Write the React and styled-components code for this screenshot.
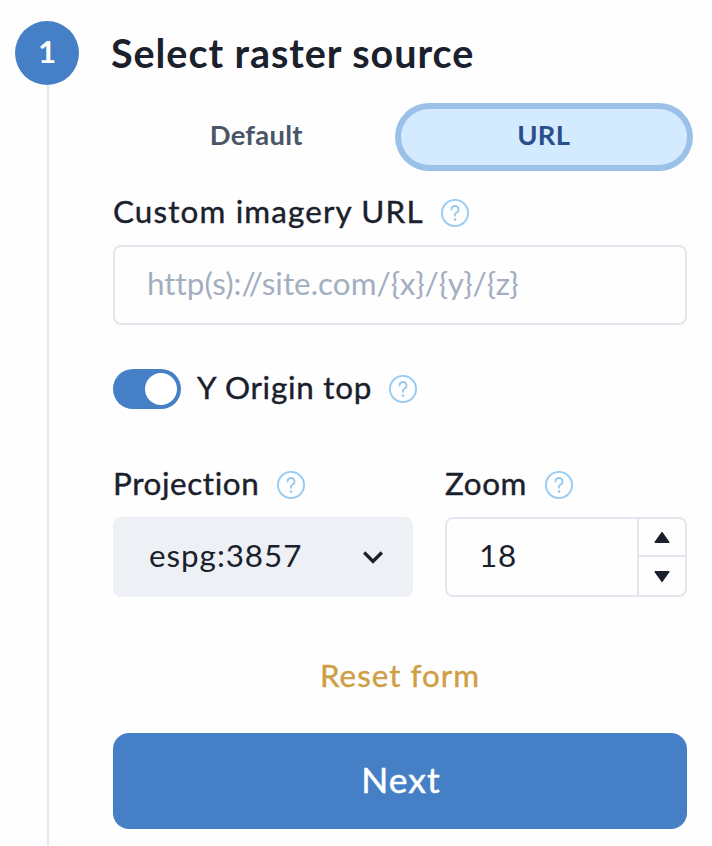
import React, { useState } from "react";
import styled, { createGlobalStyle } from "styled-components";

const Global = createGlobalStyle`
  *, *::before, *::after { box-sizing: border-box; }
  body {
    margin: 0;
    background: #fefefe;
    color: #1a202c;
    font-family: Lato, "Open Sans", sans-serif;
    font-size: 31.4px;
    line-height: 48px;
    overflow: hidden;
  }
  button, input { font: inherit; color: inherit; border: 0; padding: 0; background: none; }
`;

const Page = styled.main`
  display: grid;
  grid-template-columns: 64px 574px;
  column-gap: 34px;
  width: 712px;
  height: 846px;
  padding: 21px 0 0 15px;
  overflow: hidden;
`;

const Rail = styled.div`
  display: flex;
  flex-direction: column;
  align-items: center;
`;

const StepBadge = styled.div`
  flex: none;
  width: 64px;
  height: 64px;
  border-radius: 50%;
  background: #4580c6;
  color: #fff;
  font-size: 31.4px;
  font-weight: 700;
  line-height: 61px;
  text-align: center;
`;

const RailLine = styled.div`
  flex: 1;
  width: 2px;
  margin-left: 2px;
  background: #e2e7f0;
`;

const Form = styled.form`
  display: flex;
  flex-direction: column;
`;

const Title = styled.h1`
  margin: 0 0 24px -2px;
  height: 64px;
  font-size: 39.5px;
  font-weight: 700;
  line-height: 63px;
  letter-spacing: 0.95px;
  white-space: nowrap;
`;

const Tabs = styled.div`
  display: grid;
  grid-template-columns: 1fr 1fr;
  column-gap: 1px;
  height: 56px;
  margin-bottom: 24px;
`;

const Tab = styled.button`
  border-radius: 28px;
  padding-bottom: 4px;
  font-size: 27.4px;
  font-weight: 700;
  line-height: 52px;
  letter-spacing: 0.25px;
  color: ${(p) => (p.$active ? "#2a4e8a" : "#4a5568")};
  background: ${(p) => (p.$active ? "#d4eaff" : "transparent")};
  box-shadow: ${(p) => (p.$active ? "0 0 0 6px #9bc1e8" : "none")};
`;

const LabelRow = styled.div`
  display: flex;
  align-items: center;
  height: 48px;
  margin-bottom: ${(p) => p.$gap ?? "8px"};
`;

const Label = styled.label`
  width: ${(p) => p.$width};
  padding-bottom: 4px;
  font-weight: 400;
  letter-spacing: ${(p) => p.$spacing};
  -webkit-text-stroke: 0.4px currentColor;
  white-space: nowrap;
`;

const HelpIcon = styled.svg`
  flex: none;
  width: 28px;
  height: 28px;
  fill: none;
  stroke: #97cbf2;
  stroke-width: 1.6;
`;

const UrlInput = styled.input`
  width: 574px;
  height: 80px;
  margin-bottom: 40px;
  padding: 0 32px 4px;
  border: 2px solid #e2e7ee;
  border-radius: 8px;
  outline: 0;
  letter-spacing: 0.02px;
  &::placeholder { color: #a3afc0; opacity: 1; }
`;

const Toggle = styled.button`
  flex: none;
  display: flex;
  justify-content: ${(p) => (p.$on ? "flex-end" : "flex-start")};
  width: 68px;
  height: 40px;
  margin-right: 16px;
  padding: 4px;
  border-radius: 20px;
  background: ${(p) => (p.$on ? "#4580c6" : "#cbd5e0")};
`;

const Knob = styled.span`
  width: 32px;
  height: 32px;
  border-radius: 50%;
  background: #fff;
`;

const Columns = styled.div`
  display: grid;
  grid-template-columns: 300px 242px;
  column-gap: 32px;
  margin-bottom: 56px;
`;

const Select = styled.button`
  display: flex;
  align-items: center;
  justify-content: space-between;
  width: 300px;
  height: 80px;
  padding: 0 20px 0 36px;
  border-radius: 8px;
  background: #edf0f5;
  letter-spacing: 0.95px;
`;

const SelectValue = styled.span`
  padding-bottom: 4px;
`;

const Chevron = styled.svg`
  width: 40px;
  height: 40px;
  fill: #1a202c;
`;

const NumberField = styled.div`
  display: flex;
  height: 80px;
  border: 2px solid #e2e7ee;
  border-radius: 8px;
  overflow: hidden;
`;

const NumberInput = styled.input`
  width: 190px;
  padding: 0 0 4px 32px;
  outline: 0;
  letter-spacing: 0.8px;
`;

const Steppers = styled.div`
  display: flex;
  flex-direction: column;
  width: 50px;
  border-left: 2px solid #e2e7ee;
`;

const Stepper = styled.button`
  display: flex;
  align-items: center;
  justify-content: center;
  flex: none;
  width: 46px;
  height: 38px;
  border-bottom: ${(p) => (p.$divided ? "2px solid #e2e7ee" : "0")};
`;

const Triangle = styled.svg`
  width: 18px;
  height: 19px;
  fill: #1a202c;
`;

const ResetButton = styled.button`
  align-self: center;
  height: 48px;
  margin-bottom: 32px;
  padding-bottom: 4px;
  color: #cf9f45;
  font-weight: 400;
  letter-spacing: 1px;
  line-height: 44px;
  -webkit-text-stroke: 0.4px currentColor;
`;

const NextButton = styled.button`
  flex: none;
  height: 96px;
  padding: 0 0 2px 2px;
  border-radius: 16px;
  background: #4580c6;
  color: #fff;
  font-size: 35.4px;
  font-weight: 400;
  letter-spacing: 1.1px;
  -webkit-text-stroke: 0.5px currentColor;
`;

function Help() {
  return (
    <HelpIcon viewBox="0 0 24 24" aria-hidden="true">
      <path strokeLinecap="round" d="M9,9a3,3,0,1,1,4,2.829,1.5,1.5,0,0,0-1,1.415V14.25" />
      <path strokeLinecap="round" d="M12,17.25a.375.375,0,1,0,.375.375A.375.375,0,0,0,12,17.25h0" />
      <circle cx="12" cy="12" r="11.2" />
    </HelpIcon>
  );
}

export default function App() {
  const [source, setSource] = useState("url");
  const [originTop, setOriginTop] = useState(true);
  const [zoom, setZoom] = useState(18);

  return (
    <>
      <Global />
      <Page>
        <Rail>
          <StepBadge>1</StepBadge>
          <RailLine />
        </Rail>
        <Form onSubmit={(e) => e.preventDefault()}>
          <Title>Select raster source</Title>
          <Tabs>
            <Tab type="button" $active={source === "default"} onClick={() => setSource("default")}>Default</Tab>
            <Tab type="button" $active={source === "url"} onClick={() => setSource("url")}>URL</Tab>
          </Tabs>
          <LabelRow>
            <Label htmlFor="url" $width="328px" $spacing="1.15px">Custom imagery URL</Label>
            <Help />
          </LabelRow>
          <UrlInput id="url" placeholder="http(s)://site.com/{x}/{y}/{z}" />
          <LabelRow $gap="48px">
            <Toggle type="button" $on={originTop} onClick={() => setOriginTop(!originTop)}><Knob /></Toggle>
            <Label $width="192px" $spacing="0.75px">Y Origin top</Label>
            <Help />
          </LabelRow>
          <Columns>
            <div>
              <LabelRow>
                <Label $width="164px" $spacing="0.6px">Projection</Label>
                <Help />
              </LabelRow>
              <Select type="button">
                <SelectValue>espg:3857</SelectValue>
                <Chevron viewBox="0 0 24 24"><path d="M16.59 8.59L12 13.17 7.41 8.59 6 10l6 6 6-6z" /></Chevron>
              </Select>
            </div>
            <div>
              <LabelRow>
                <Label htmlFor="zoom" $width="100px" $spacing="0.6px">Zoom</Label>
                <Help />
              </LabelRow>
              <NumberField>
                <NumberInput id="zoom" value={zoom} onChange={(e) => setZoom(Number(e.target.value) || 0)} />
                <Steppers>
                  <Stepper type="button" $divided onClick={() => setZoom(zoom + 1)}>
                    <Triangle viewBox="0 0 24 24" preserveAspectRatio="none"><path d="M12.8,5.4c-0.377-0.504-1.223-0.504-1.6,0l-9,12c-0.228,0.303-0.264,0.708-0.095,1.047C2.275,18.786,2.621,19,3,19h18c0.379,0,0.725-0.214,0.895-0.553c0.169-0.339,0.133-0.744-0.095-1.047L12.8,5.4z" /></Triangle>
                  </Stepper>
                  <Stepper type="button" onClick={() => setZoom(zoom - 1)}>
                    <Triangle viewBox="0 0 24 24" preserveAspectRatio="none"><path d="M21,5H3C2.621,5,2.275,5.214,2.105,5.553C1.937,5.892,1.973,6.297,2.2,6.6l9,12c0.188,0.252,0.485,0.4,0.8,0.4s0.611-0.148,0.8-0.4l9-12c0.228-0.303,0.264-0.708,0.095-1.047C21.725,5.214,21.379,5,21,5z" /></Triangle>
                  </Stepper>
                </Steppers>
              </NumberField>
            </div>
          </Columns>
          <ResetButton type="button">Reset form</ResetButton>
          <NextButton type="submit">Next</NextButton>
        </Form>
      </Page>
    </>
  );
}
